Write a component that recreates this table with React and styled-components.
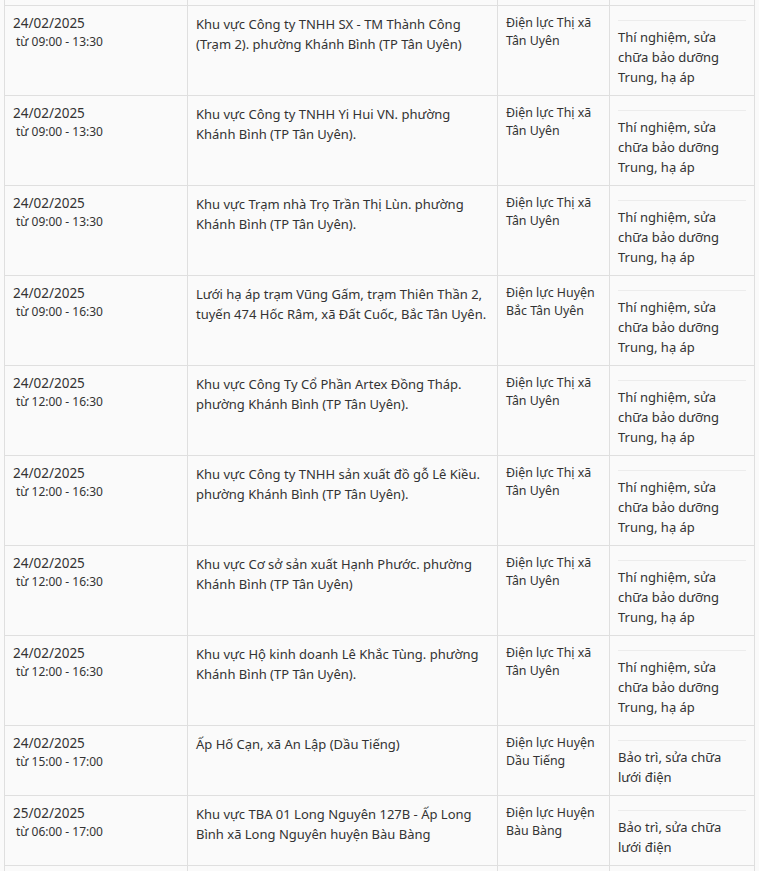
import React from 'react';
import styled, { createGlobalStyle } from 'styled-components';

const GlobalStyle = createGlobalStyle`
  html, body {
    margin: 0;
    padding: 0;
    background: #fafafa;
  }
  body {
    font-family: "Noto Sans", "Open Sans", sans-serif;
    color: #333;
    overflow: hidden;
  }
`;

const Viewport = styled.div`
  height: 871px;
  overflow: hidden;
`;

const Table = styled.table`
  border-collapse: collapse;
  table-layout: fixed;
  width: 750px;
  margin-left: 4px;
  font-size: 13px;
  line-height: 20px;
  background: #fafafa;
`;

const Cell = styled.td`
  border: 1px solid #dfdfdf;
  padding: 8px;
  vertical-align: top;
  white-space: nowrap;
  overflow: hidden;
`;

const EdgeCell = styled.td`
  border: 1px solid #dfdfdf;
  border-top: ${p => (p.$top ? 'none' : '1px solid #dfdfdf')};
  padding: 0;
  height: 5px;
`;

const UnitCell = styled(Cell)`
  font-size: 12.4px;
  line-height: 18px;
`;

const DateText = styled.div`
  font-size: 13.5px;
  line-height: 19px;
`;

const TimeText = styled.div`
  font-size: 12px;
  line-height: 18px;
  padding-left: 3px;
`;

const Rule = styled.div`
  height: 1px;
  background: #ececec;
  margin: 6px 0;
`;

const Lines = ({ lines }) =>
  lines.map((l, i) => (
    <React.Fragment key={i}>
      {i > 0 && <br />}
      {l}
    </React.Fragment>
  ));

const TN = ['Thí nghiệm, sửa', 'chữa bảo dưỡng', 'Trung, hạ áp'];
const BT = ['Bảo trì, sửa chữa', 'lưới điện'];
const TXTU = ['Điện lực Thị xã', 'Tân Uyên'];

const rows = [
  {
    date: '24/02/2025', time: 'từ 09:00 - 13:30',
    place: ['Khu vực Công ty TNHH SX - TM Thành Công', '(Trạm 2). phường Khánh Bình (TP Tân Uyên)'],
    unit: TXTU, reason: TN,
  },
  {
    date: '24/02/2025', time: 'từ 09:00 - 13:30',
    place: ['Khu vực Công ty TNHH Yi Hui VN. phường', 'Khánh Bình (TP Tân Uyên).'],
    unit: TXTU, reason: TN,
  },
  {
    date: '24/02/2025', time: 'từ 09:00 - 13:30',
    place: ['Khu vực Trạm nhà Trọ Trần Thị Lùn. phường', 'Khánh Bình (TP Tân Uyên).'],
    unit: TXTU, reason: TN,
  },
  {
    date: '24/02/2025', time: 'từ 09:00 - 16:30',
    place: ['Lưới hạ áp trạm Vũng Gấm, trạm Thiên Thần 2,', 'tuyến 474 Hốc Râm, xã Đất Cuốc, Bắc Tân Uyên.'],
    unit: ['Điện lực Huyện', 'Bắc Tân Uyên'], reason: TN,
  },
  {
    date: '24/02/2025', time: 'từ 12:00 - 16:30',
    place: ['Khu vực Công Ty Cổ Phần Artex Đồng Tháp.', 'phường Khánh Bình (TP Tân Uyên).'],
    unit: TXTU, reason: TN,
  },
  {
    date: '24/02/2025', time: 'từ 12:00 - 16:30',
    place: ['Khu vực Công ty TNHH sản xuất đồ gỗ Lê Kiều.', 'phường Khánh Bình (TP Tân Uyên).'],
    unit: TXTU, reason: TN,
  },
  {
    date: '24/02/2025', time: 'từ 12:00 - 16:30',
    place: ['Khu vực Cơ sở sản xuất Hạnh Phước. phường', 'Khánh Bình (TP Tân Uyên)'],
    unit: TXTU, reason: TN,
  },
  {
    date: '24/02/2025', time: 'từ 12:00 - 16:30',
    place: ['Khu vực Hộ kinh doanh Lê Khắc Tùng. phường', 'Khánh Bình (TP Tân Uyên).'],
    unit: TXTU, reason: TN,
  },
  {
    date: '24/02/2025', time: 'từ 15:00 - 17:00',
    place: ['Ấp Hố Cạn, xã An Lập (Dầu Tiếng)'],
    unit: ['Điện lực Huyện', 'Dầu Tiếng'], reason: BT,
  },
  {
    date: '25/02/2025', time: 'từ 06:00 - 17:00',
    place: ['Khu vực TBA 01 Long Nguyên 127B - Ấp Long', 'Bình xã Long Nguyên huyện Bàu Bàng'],
    unit: ['Điện lực Huyện', 'Bàu Bàng'], reason: BT,
  },
];

const EdgeRow = ({ top }) => (
  <tr>
    {[0, 1, 2, 3].map(i => <EdgeCell key={i} $top={top} />)}
  </tr>
);

export default function App() {
  return (
    <Viewport>
      <GlobalStyle />
      <Table>
        <colgroup>
          <col style={{ width: 183 }} />
          <col style={{ width: 310 }} />
          <col style={{ width: 112 }} />
          <col style={{ width: 145 }} />
        </colgroup>
        <tbody>
          <EdgeRow top />
          {rows.map((r, i) => (
            <tr key={i}>
              <Cell>
                <DateText>{r.date}</DateText>
                <TimeText>{r.time}</TimeText>
              </Cell>
              <Cell><Lines lines={r.place} /></Cell>
              <UnitCell><Lines lines={r.unit} /></UnitCell>
              <Cell>
                <Rule />
                <Lines lines={r.reason} />
              </Cell>
            </tr>
          ))}
          <EdgeRow />
        </tbody>
      </Table>
    </Viewport>
  );
}
